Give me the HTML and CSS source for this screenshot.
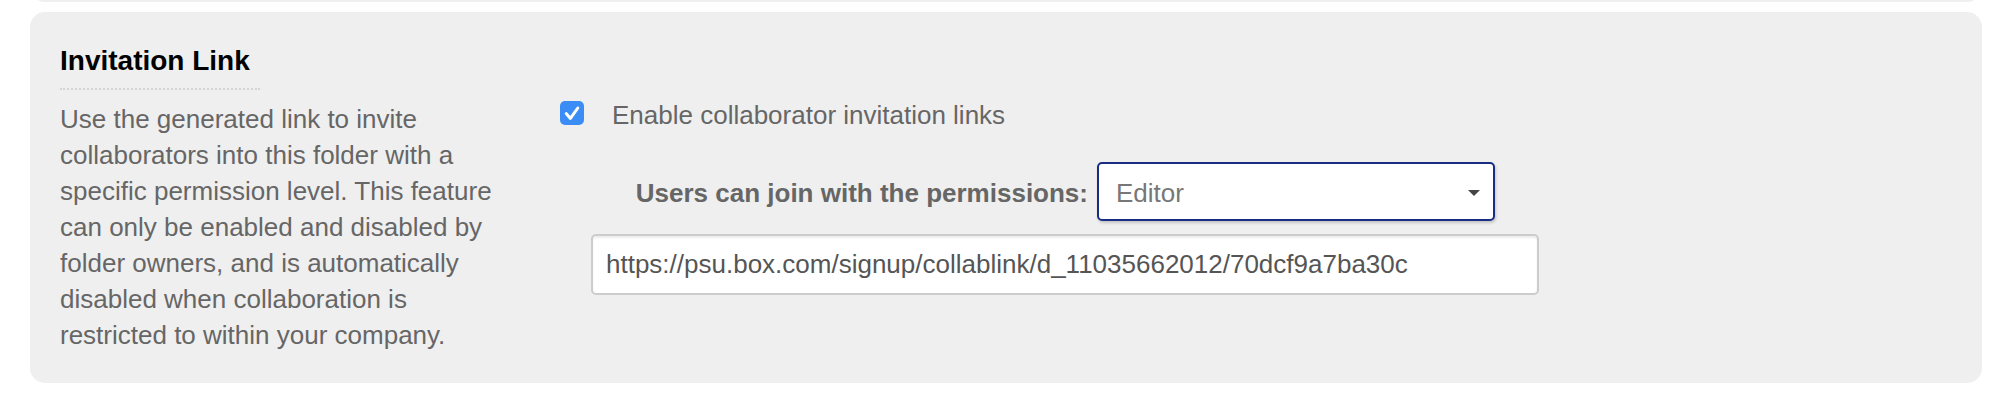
FILE: index.html
```html
<!DOCTYPE html>
<html lang="en">
<head>
<meta charset="utf-8">
<title>Invitation Link</title>
<link rel="stylesheet" href="styles.css">
</head>
<body>
<div class="prev-clip"><div class="prev-panel"></div></div>
<section class="panel">
  <div class="info">
    <h2 class="info-title">Invitation Link</h2>
    <p class="info-text">Use the generated link to invite collaborators into this folder with a specific permission level. This feature can only be enabled and disabled by folder owners, and is automatically disabled when collaboration is restricted to within your company.</p>
  </div>
  <div class="settings">
    <label class="check-row">
      <span class="checkbox">
        <svg width="24" height="24" viewBox="0 0 24 24"><path d="M6.2 12.6 L10.4 17.4 L17.8 7" fill="none" stroke="#fff" stroke-width="3" stroke-linecap="round" stroke-linejoin="round"/></svg>
      </span>
      <span class="check-label">Enable collaborator invitation links</span>
    </label>
    <div class="perm-block">
      <div class="perm-row">
        <span class="perm-label">Users can join with the permissions:</span>
        <div class="select">
          <span class="select-value">Editor</span>
          <svg class="caret" width="12" height="6" viewBox="0 0 12 6"><path d="M0 0 H12 L6 6 Z" fill="#444"/></svg>
        </div>
      </div>
      <input class="link-input" type="text" readonly value="https://psu.box.com/signup/collablink/d_11035662012/70dcf9a7ba30c">
    </div>
  </div>
</section>
</body>
</html>
```
FILE: styles.css
```css
html, body {
  margin: 0;
  padding: 0;
  background: #ffffff;
}

body {
  font-family: "Liberation Sans", Arial, Helvetica, sans-serif;
  color: #666666;
}

.prev-clip {
  height: 2px;
  overflow: hidden;
  display: flex;
  align-items: flex-end;
  margin: 0 26px 0 30px;
}

.prev-panel {
  flex: none;
  width: 100%;
  height: 30px;
  background: #efefef;
  border-radius: 0 0 15px 15px;
}

.panel {
  margin: 10px 26px 0 30px;
  padding: 32px 30px 30px 30px;
  background: #efefef;
  border-radius: 15px;
  display: flex;
  align-items: flex-start;
}

.info {
  flex: none;
  width: 446px;
}

.info-title {
  margin: 0;
  width: 200px;
  font-size: 28px;
  line-height: 32px;
  font-weight: bold;
  color: #000000;
  padding-top: 1px;
  padding-bottom: 11px;
  border-bottom: 2px dotted #d4d4d4;
}

.info-text {
  margin: 11px 0 0 0;
  font-size: 26px;
  line-height: 36px;
  color: #666666;
}

.settings {
  margin-left: 54px;
  padding-top: 53px;
}

.check-row {
  display: flex;
  align-items: flex-start;
  font-size: 26px;
  line-height: 36px;
  color: #666666;
}

.checkbox {
  flex: none;
  width: 24px;
  height: 24px;
  margin-top: 4px;
  border-radius: 5px;
  background: #3b8df5;
  display: flex;
}

.check-label {
  margin-left: 28px;
}

.perm-block {
  margin: 29px 0 0 31px;
  width: 948px;
}

.perm-row {
  display: flex;
  justify-content: flex-end;
  align-items: baseline;
  gap: 9px;
  padding-right: 44px;
}

.perm-label {
  font-size: 26px;
  line-height: 36px;
  font-weight: bold;
  color: #666666;
}

.select {
  box-sizing: border-box;
  width: 398px;
  height: 59px;
  padding: 3px 13px 0 17px;
  border: 2px solid #1a2d85;
  border-radius: 5px;
  background: #ffffff;
  box-shadow: 1px 2px 3px rgba(0, 0, 0, 0.18);
  display: flex;
  align-items: center;
  font-size: 26px;
  line-height: 52px;
  color: #777777;
}

.select-value {
  flex: 1;
}

.caret {
  flex: none;
}

.link-input {
  display: block;
  box-sizing: border-box;
  width: 948px;
  height: 61px;
  margin-top: 13px;
  padding: 0 13px;
  border: 2px solid #cccccc;
  border-radius: 5px;
  background: #ffffff;
  box-shadow: inset 0 2px 2px rgba(0, 0, 0, 0.075);
  font-family: "Liberation Sans", Arial, Helvetica, sans-serif;
  font-size: 26px;
  color: #555555;
  outline: none;
}
```
